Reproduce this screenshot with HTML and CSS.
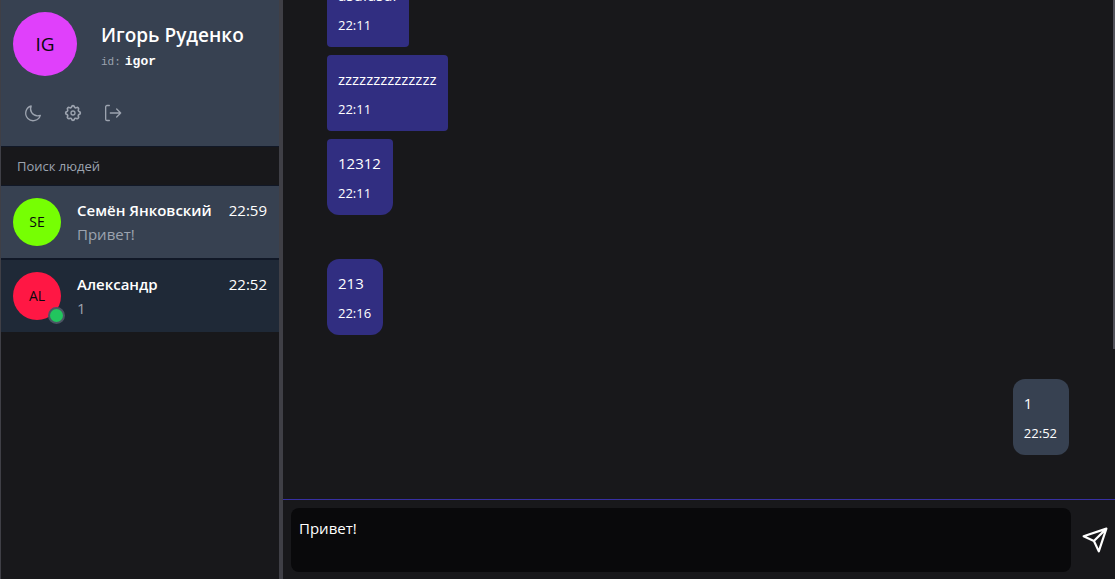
FILE: index.html
```html
<!DOCTYPE html>
<html lang="ru">
<head>
<meta charset="utf-8">
<meta name="viewport" content="width=device-width, initial-scale=1">
<title>Чат</title>
<link rel="stylesheet" href="styles.css">
</head>
<body>
<div class="app">
  <aside class="sidebar">
    <header class="profile">
      <div class="profile-main">
        <div class="avatar avatar-large avatar-purple">IG</div>
        <div class="profile-info">
          <h1 class="profile-name">Игорь Руденко</h1>
          <p class="profile-id"><span class="id-label">id:</span><span class="id-value">igor</span></p>
        </div>
      </div>
      <div class="tools">
        <button class="tool" type="button" aria-label="Тёмная тема">
          <svg viewBox="0 0 24 24"><path d="M23 15.5A10.6 10.6 0 0 1 19 16.300 10.400 10.400 0 0 1 9.300 1.500 11.200 11.200 0 1 0 23 15.500Z"/></svg>
        </button>
        <button class="tool" type="button" aria-label="Настройки">
          <svg viewBox="0 0 24 24"><path d="M10.3 4.3c.4-1.8 3-1.8 3.4 0a1.7 1.7 0 0 0 2.6 1.1c1.5-1 3.3.8 2.4 2.4a1.7 1.7 0 0 0 1 2.5c1.8.4 1.8 3 0 3.4a1.7 1.7 0 0 0-1 2.6c.9 1.5-.9 3.3-2.4 2.4a1.7 1.7 0 0 0-2.6 1c-.4 1.8-3 1.8-3.4 0a1.7 1.7 0 0 0-2.6-1c-1.5.9-3.3-.9-2.4-2.4a1.7 1.7 0 0 0-1-2.6c-1.8-.4-1.8-3 0-3.4a1.7 1.7 0 0 0 1-2.5c-.9-1.6.9-3.4 2.4-2.4a1.7 1.7 0 0 0 2.6-1.1Z" transform="translate(12 12) scale(1.22) translate(-12 -12)"/><circle cx="12" cy="12" r="3"/></svg>
        </button>
        <button class="tool" type="button" aria-label="Выйти">
          <svg viewBox="0 0 24 24"><path d="M6.500.8H3a2 2 0 0 0-2 2v18.400a2 2 0 0 0 2 2h3.500M8 12h15.500M17.500 6l6 6-6 6"/></svg>
        </button>
      </div>
    </header>
    <input class="search" type="search" placeholder="Поиск людей" aria-label="Поиск людей">
    <nav class="contacts" aria-label="Диалоги">
      <button class="contact contact-active" type="button">
        <span class="avatar avatar-green">SE</span>
        <span class="contact-body">
          <span class="contact-top"><strong class="contact-name">Семён Янковский</strong><time>22:59</time></span>
          <span class="contact-text">Привет!</span>
        </span>
      </button>
      <button class="contact" type="button">
        <span class="avatar avatar-red">AL<span class="online"></span></span>
        <span class="contact-body">
          <span class="contact-top"><strong class="contact-name">Александр</strong><time>22:52</time></span>
          <span class="contact-text">1</span>
        </span>
      </button>
    </nav>
  </aside>
  <main class="chat">
    <div class="messages">
      <div class="group">
        <div class="message"><p>asdfasdf</p><time>22:11</time></div>
        <div class="message"><p>zzzzzzzzzzzzzz</p><time>22:11</time></div>
        <div class="message"><p>12312</p><time>22:11</time></div>
      </div>
      <div class="group">
        <div class="message message-first"><p>213</p><time>22:16</time></div>
      </div>
      <div class="group group-own">
        <div class="message message-first"><p>1</p><time>22:52</time></div>
      </div>
      <span class="scroll-thumb"></span>
    </div>
    <form class="composer">
      <textarea class="composer-input" aria-label="Сообщение">Привет!</textarea>
      <button class="send" type="button" aria-label="Отправить">
        <svg viewBox="0 0 24 24"><path d="M22.500 1.500 1.500 8.500l9.500 4.500 4.500 9.500ZM22.500 1.500 11 13"/></svg>
      </button>
    </form>
  </main>
</div>
</body>
</html>
```
FILE: styles.css
```css
* {
  box-sizing: border-box;
}

body {
  margin: 0;
  background: #18181b;
  color: #fff;
  font-family: "Open Sans", "Noto Sans", sans-serif;
  font-size: 15px;
  line-height: 24px;
}

h1, p {
  margin: 0;
}

button, input, textarea {
  margin: 0;
  border: 0;
  color: inherit;
  font: inherit;
}

svg {
  display: block;
  fill: none;
  stroke: currentColor;
  stroke-linecap: round;
  stroke-linejoin: round;
}

.app {
  display: flex;
  height: 100vh;
}

.sidebar {
  display: flex;
  flex: 0 0 283px;
  flex-direction: column;
  border-left: 1px solid #3f3f46;
  border-right: 4px solid #3f3f46;
}

.profile {
  padding: 12px 12px 0;
  background: #374151;
}

.profile-main {
  display: flex;
  gap: 24px;
}

.avatar {
  position: relative;
  display: flex;
  flex: none;
  align-items: center;
  justify-content: center;
  width: 48px;
  height: 48px;
  border-radius: 50%;
  color: #09090b;
  font-size: 14px;
}

.avatar-large {
  width: 64px;
  height: 64px;
  font-size: 19px;
}

.avatar-purple {
  background: #e040fb;
}

.avatar-green {
  background: #76ff03;
}

.avatar-red {
  background: #ff1744;
}

.profile-info {
  padding-top: 8px;
}

.profile-name {
  font-size: 19px;
  font-weight: 600;
  line-height: 30px;
}

.profile-id {
  display: flex;
  gap: 4px;
  align-items: baseline;
  font-family: "Liberation Mono", monospace;
  line-height: 24px;
}

.id-label {
  color: #9ca3af;
  font-size: 11px;
}

.id-value {
  font-size: 13px;
  font-weight: 700;
}

.tools {
  display: flex;
  padding: 17px 0 13px;
}

.tool {
  width: 40px;
  height: 40px;
  padding: 12px;
  background: none;
  color: #9ca3af;
}

.tool svg {
  width: 16px;
  height: 16px;
  overflow: visible;
  stroke-width: 2;
}

.search {
  width: 100%;
  height: 40px;
  padding: 0 16px;
  border-top: 1px solid #111827;
  border-bottom: 1px solid #111827;
  background: #18181b;
  font-size: 13px;
}

.search::placeholder {
  color: #9ca3af;
}

.contacts {
  display: flex;
  flex-direction: column;
  gap: 2px;
  background: #111827;
}

.contact {
  display: flex;
  gap: 16px;
  padding: 12px;
  background: #1f2937;
  text-align: left;
}

.contact-active {
  background: #374151;
}

.contact-body {
  flex: 1;
  min-width: 0;
}

.contact-top {
  display: flex;
  justify-content: space-between;
}

.contact-name {
  font-weight: 600;
}

.contact-text {
  display: block;
  color: #9ca3af;
}

.online {
  position: absolute;
  right: -4px;
  bottom: -4px;
  width: 17px;
  height: 17px;
  border: 2px solid #4b5563;
  border-radius: 50%;
  background: #22c55e;
}

.chat {
  display: flex;
  flex: 1;
  flex-direction: column;
  min-width: 0;
}

.messages {
  position: relative;
  display: flex;
  flex: 1;
  flex-direction: column;
  gap: 44px;
  justify-content: flex-end;
  min-height: 0;
  padding: 0 46px 44px 44px;
  overflow: hidden;
}

.group {
  display: flex;
  flex: none;
  flex-direction: column;
  gap: 8px;
  align-items: flex-start;
}

.group-own {
  align-items: flex-end;
}

.message {
  padding: 12px 12px 10px 11px;
  border-radius: 4px;
  background: #312e81;
}

.message time {
  display: block;
  padding-top: 6px;
  font-size: 13px;
}

.message:last-child {
  border-radius: 4px 4px 12px 12px;
}

.message.message-first {
  border-radius: 12px;
}

.group-own .message {
  background: #374151;
}

.scroll-thumb {
  position: absolute;
  top: 0;
  right: 0;
  width: 2px;
  height: 70%;
  background: #52525b;
}

.composer {
  display: flex;
  padding: 8px 0 7px 8px;
  border-top: 1px solid #3730a3;
}

.composer-input {
  flex: 1;
  height: 64px;
  padding: 8px;
  border-radius: 8px;
  background: #09090b;
  resize: none;
}

.send {
  width: 44px;
  padding: 0 8px 0 11px;
  background: none;
}

.send svg {
  width: 26px;
  height: 26px;
  stroke-width: 2;
}
```
